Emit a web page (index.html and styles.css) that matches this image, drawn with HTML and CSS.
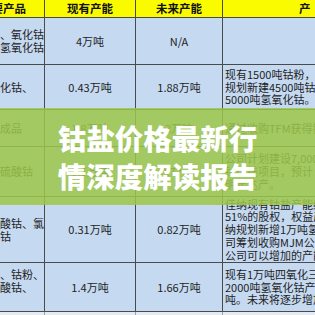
FILE: index.html
```html
<!DOCTYPE html>
<html lang="zh-CN">
<head>
<meta charset="utf-8">
<title>钴盐价格最新行情深度解读报告</title>
<link rel="stylesheet" href="styles.css">
</head>
<body>
<div class="sheet">
  <table class="grid">
    <colgroup><col class="c-name"><col class="c-now"><col class="c-future"><col class="c-note"></colgroup>
    <thead>
      <tr class="head"><th class="h-name">主要产品</th><th>现有产能</th><th>未来产能</th><th class="h-note">产能规划</th></tr>
    </thead>
    <tbody>
      <tr class="r1"><td class="name pad-a">钴、氧化钴<br>、氢氧化钴</td><td class="num">4万吨</td><td class="num">N/A</td><td class="note"></td></tr>
      <tr class="r2"><td class="name pad-b">氯化钴、</td><td class="num">0.43万吨</td><td class="num">1.88万吨</td><td class="note">现有1500吨钴粉，<br>规划新建4500吨钴粉、<br>5000吨氢氧化钴。</td></tr>
      <tr class="r3"><td class="name">半成品</td><td class="num">1.8万吨</td><td class="num">3万吨</td><td class="note">通过收购TFM获得铜钴资源</td></tr>
      <tr class="r4"><td class="name">及硫酸钴</td><td class="num">0.5万吨</td><td class="num">0.7万吨</td><td class="note">公司计划建设7,000吨<br>钴产线项目，预计<br>明年达产。</td></tr>
      <tr class="r5"><td class="name">硫酸钴、氯<br>化钴</td><td class="num">0.31万吨</td><td class="num">0.82万吨</td><td class="note">佳纳现有钴盐产能约6000吨，<br>51%的股权，权益产能较低；<br>纳规划新增1万吨氢氧化钴，<br>司筹划收购MJM公司剩余股权，<br>公司可以增加的产能较多。</td></tr>
      <tr class="r6"><td class="name">钴、钴粉、<br>碳酸钴、<br>等</td><td class="num">1.4万吨</td><td class="num">1.66万吨</td><td class="note">现有1万吨四氧化三钴、<br>2000吨氢氧化钴产能约1.4万<br>吨。未来将逐步增加产能。</td></tr>
      <tr class="tail"><td></td><td></td><td></td><td></td></tr>
    </tbody>
  </table>
  <div class="banner">
    <h1 class="banner-title">钴盐价格最新行<br>情深度解读报告</h1>
  </div>
</div>
</body>
</html>
```

FILE: styles.css
```css
* { box-sizing: border-box; }

body {
  margin: 0;
  background: #ffffff;
  font-family: "Noto Sans CJK SC", "Noto Sans", sans-serif;
}

.sheet {
  position: relative;
  width: 315px;
  height: 315px;
  overflow: hidden;
  background: #eaeef3;
}

.grid {
  border-collapse: collapse;
  table-layout: fixed;
  width: 466px;
  margin: -1px 0 0 -14px;
  font-size: 11px;
  line-height: 12.75px;
  color: #1e1e1e;
}

.c-name { width: 58px; }
.c-now { width: 91px; }
.c-future { width: 87px; }
.c-note { width: 230px; }

.grid th,
.grid td {
  border: 1px solid #4a4a4a;
  padding: 0 2px;
  overflow: hidden;
  white-space: nowrap;
  vertical-align: middle;
}

.grid th {
  background: #fbfb00;
  font-weight: 700;
  font-size: 11.5px;
  text-align: center;
  color: #111;
}

.grid th.h-name {
  text-align: left;
  padding: 0;
  text-indent: -7px;
}

.grid th.h-note {
  letter-spacing: 8px;
  text-align: left;
  padding-left: 76px;
}

.grid td { background: #c5d9f1; }

.head { height: 18px; }
.r1 { height: 47px; }
.r2 { height: 45px; }
.r3 { height: 37px; }
.r4 { height: 50px; }
.r5 { height: 66px; }
.r6 { height: 49px; }
.tail { height: 12px; }
.tail td { background: #e6ebf1; border-color: #9aa3ad; }

.name { text-align: left; }
.pad-a { vertical-align: top; padding-top: 7px; }
.pad-b { vertical-align: top; padding-top: 3px; }

.num { text-align: center; padding-top: 4px; }

.note { text-align: left; padding-left: 3px; }

.banner {
  position: absolute;
  left: 0;
  right: 0;
  top: 108px;
  height: 97px;
  background: rgba(156, 198, 75, 0.86);
  display: flex;
  align-items: center;
  justify-content: center;
}

.banner-title {
  margin: 0;
  color: #ffffff;
  font-size: 28.5px;
  font-weight: 900;
  line-height: 38px;
  text-align: center;
}
```
